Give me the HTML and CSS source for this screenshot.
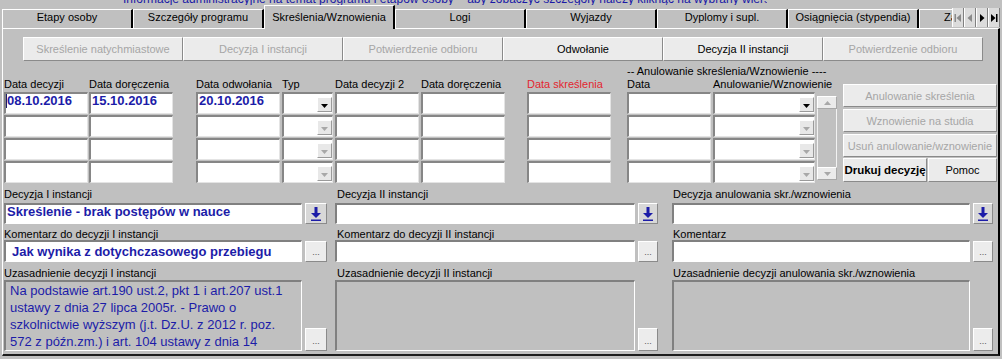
FILE: index.html
```html
<!DOCTYPE html>
<html lang="pl">
<head>
<meta charset="utf-8">
<title>Skreślenia/Wznowienia</title>
<link rel="stylesheet" href="styles.css">
</head>
<body>
<div class="topline"><span>Informacje administracyjne na temat programu i etapów osoby – aby zobaczyć szczegóły należy kliknąć na wybrany wiersz z nazwiskiem studenta (F1)</span></div>

<div class="tabs">
  <div class="tab">Etapy osoby</div>
  <div class="tab">Szczegóły programu</div>
  <div class="tab active">Skreślenia/Wznowienia</div>
  <div class="tab">Logi</div>
  <div class="tab">Wyjazdy</div>
  <div class="tab">Dyplomy i supl.</div>
  <div class="tab">Osiągnięcia (stypendia)</div>
  <div class="tab">Zakwaterowanie</div>
  <div class="tabnav">
    <span class="navbtn"><svg width="8" height="8" viewBox="0 0 8 8"><rect x="0.5" y="0" width="1.5" height="8" fill="#8a8a8a"/><polygon points="7,0 7,8 2.5,4" fill="#8a8a8a"/></svg></span>
    <span class="navbtn"><svg width="8" height="8" viewBox="0 0 8 8"><polygon points="6,0 6,8 1.5,4" fill="#8a8a8a"/></svg></span>
    <span class="navbtn"><svg width="8" height="8" viewBox="0 0 8 8"><polygon points="2,0 2,8 6.5,4" fill="#000"/></svg></span>
    <span class="navbtn"><svg width="8" height="8" viewBox="0 0 8 8"><polygon points="1,0 1,8 5.5,4" fill="#000"/><rect x="6" y="0" width="1.5" height="8" fill="#000"/></svg></span>
  </div>
</div>

<div class="panel">
  <div class="btnrow">
    <div class="btn dis">Skreślenie natychmiastowe</div>
    <div class="btn dis">Decyzja I instancji</div>
    <div class="btn dis">Potwierdzenie odbioru</div>
    <div class="btn">Odwołanie</div>
    <div class="btn">Decyzja II instancji</div>
    <div class="btn dis">Potwierdzenie odbioru</div>
  </div>

  <div class="mid">
    <div class="col c-a">
      <div class="lab">Data decyzji</div>
      <div class="cell val"><span class="caret"></span>08.10.2016</div>
      <div class="cell"></div><div class="cell"></div><div class="cell"></div>
    </div>
    <div class="col c-b">
      <div class="lab">Data doręczenia</div>
      <div class="cell val">15.10.2016</div>
      <div class="cell"></div><div class="cell"></div><div class="cell"></div>
    </div>
    <div class="col c-c">
      <div class="lab">Data odwołania</div>
      <div class="cell val">20.10.2016</div>
      <div class="cell"></div><div class="cell"></div><div class="cell"></div>
    </div>
    <div class="col c-d">
      <div class="lab">Typ</div>
      <div class="cell dd"><span class="ddbtn"><svg width="7" height="4" viewBox="0 0 7 4"><polygon points="0,0 7,0 3.5,4" fill="#000"/></svg></span></div>
      <div class="cell dd"><span class="ddbtn"><svg width="7" height="4" viewBox="0 0 7 4"><polygon points="0,0 7,0 3.5,4" fill="#a8a8a8"/></svg></span></div>
      <div class="cell dd"><span class="ddbtn"><svg width="7" height="4" viewBox="0 0 7 4"><polygon points="0,0 7,0 3.5,4" fill="#a8a8a8"/></svg></span></div>
      <div class="cell dd"><span class="ddbtn"><svg width="7" height="4" viewBox="0 0 7 4"><polygon points="0,0 7,0 3.5,4" fill="#a8a8a8"/></svg></span></div>
    </div>
    <div class="col c-e">
      <div class="lab">Data decyzji 2</div>
      <div class="cell"></div><div class="cell"></div><div class="cell"></div><div class="cell"></div>
    </div>
    <div class="col c-f">
      <div class="lab">Data doręczenia</div>
      <div class="cell"></div><div class="cell"></div><div class="cell"></div><div class="cell"></div>
    </div>
    <div class="col c-g">
      <div class="lab red">Data skreślenia</div>
      <div class="cell"></div><div class="cell"></div><div class="cell"></div><div class="cell"></div>
    </div>
    <div class="group">
      <div class="ghead">-- Anulowanie skreślenia/Wznowienie ----</div>
      <div class="grow">
        <div class="col c-h">
          <div class="lab">Data</div>
          <div class="cell"></div><div class="cell"></div><div class="cell"></div><div class="cell"></div>
        </div>
        <div class="col c-i">
          <div class="lab">Anulowanie/Wznowienie</div>
          <div class="cell dd"><span class="ddbtn"><svg width="7" height="4" viewBox="0 0 7 4"><polygon points="0,0 7,0 3.5,4" fill="#000"/></svg></span></div>
          <div class="cell dd"><span class="ddbtn"><svg width="7" height="4" viewBox="0 0 7 4"><polygon points="0,0 7,0 3.5,4" fill="#a8a8a8"/></svg></span></div>
          <div class="cell dd"><span class="ddbtn"><svg width="7" height="4" viewBox="0 0 7 4"><polygon points="0,0 7,0 3.5,4" fill="#a8a8a8"/></svg></span></div>
          <div class="cell dd"><span class="ddbtn"><svg width="7" height="4" viewBox="0 0 7 4"><polygon points="0,0 7,0 3.5,4" fill="#a8a8a8"/></svg></span></div>
        </div>
        <div class="vscroll">
          <span class="sbbtn"><svg width="7" height="4" viewBox="0 0 7 4"><polygon points="0,4 7,4 3.5,0" fill="#a8a8a8"/></svg></span>
          <span class="sbtrack"></span>
          <span class="sbbtn"><svg width="7" height="4" viewBox="0 0 7 4"><polygon points="0,0 7,0 3.5,4" fill="#a8a8a8"/></svg></span>
        </div>
      </div>
    </div>
    <div class="rbtns">
      <div class="rb dis">Anulowanie skreślenia</div>
      <div class="rb dis">Wznowienie na studia</div>
      <div class="rb dis">Usuń anulowanie/wznowienie</div>
      <div class="rbrow">
        <div class="rb print">Drukuj decyzję</div>
        <div class="rb help">Pomoc</div>
      </div>
    </div>
  </div>

  <div class="bottom">
    <div class="bcol bcol1">
      <div class="blab blab1">Decyzja I instancji</div>
      <div class="field f1">
        <div class="box sunk bval">Skreślenie - brak postępów w nauce</div>
        <div class="pick w22"><svg width="10" height="14" viewBox="0 0 10 14"><rect x="3.5" y="0" width="3" height="6" fill="#1c1ca8"/><polygon points="0,6 10,6 5,11" fill="#1c1ca8"/><rect x="0" y="12.5" width="10" height="1.5" fill="#1c1ca8"/></svg></div>
      </div>
      <div class="blab blab2">Komentarz do decyzji I instancji</div>
      <div class="field f2">
        <div class="box sunk bval bval2">Jak wynika z dotychczasowego przebiegu</div>
        <div class="more w22">...</div>
      </div>
      <div class="blab blab3">Uzasadnienie decyzji I instancji</div>
      <div class="field f3">
        <div class="box sunk grey memo">Na podstawie art.190 ust.2, pkt 1 i art.207 ust.1<br>ustawy z dnia 27 lipca 2005r. - Prawo o<br>szkolnictwie wyższym (j.t. Dz.U. z 2012 r. poz.<br>572 z późn.zm.) i art. 104 ustawy z dnia 14</div>
        <div class="more w22 tall">...</div>
      </div>
    </div>

    <div class="bcol bcol2">
      <div class="blab blab1">Decyzja II instancji</div>
      <div class="field f1">
        <div class="box sunk"></div>
        <div class="pick"><svg width="10" height="14" viewBox="0 0 10 14"><rect x="3.5" y="0" width="3" height="6" fill="#1c1ca8"/><polygon points="0,6 10,6 5,11" fill="#1c1ca8"/><rect x="0" y="12.5" width="10" height="1.5" fill="#1c1ca8"/></svg></div>
      </div>
      <div class="blab blab2">Komentarz do decyzji II instancji</div>
      <div class="field f2">
        <div class="box sunk"></div>
        <div class="more">...</div>
      </div>
      <div class="blab blab3">Uzasadnienie decyzji II instancji</div>
      <div class="field f3">
        <div class="box sunk grey"></div>
        <div class="more tall">...</div>
      </div>
    </div>

    <div class="bcol bcol3">
      <div class="blab blab1">Decyzja anulowania skr./wznowienia</div>
      <div class="field f1">
        <div class="box sunk"></div>
        <div class="pick"><svg width="10" height="14" viewBox="0 0 10 14"><rect x="3.5" y="0" width="3" height="6" fill="#1c1ca8"/><polygon points="0,6 10,6 5,11" fill="#1c1ca8"/><rect x="0" y="12.5" width="10" height="1.5" fill="#1c1ca8"/></svg></div>
      </div>
      <div class="blab blab2">Komentarz</div>
      <div class="field f2">
        <div class="box sunk"></div>
        <div class="more">...</div>
      </div>
      <div class="blab blab3">Uzasadnienie decyzji anulowania skr./wznowienia</div>
      <div class="field f3">
        <div class="box sunk grey"></div>
        <div class="more tall">...</div>
      </div>
    </div>
  </div>
</div>
</body>
</html>
```

FILE: styles.css
```css
* { box-sizing: border-box; }

html, body { margin: 0; }

body {
  width: 1002px;
  height: 359px;
  overflow: hidden;
  background: #c0c0c0;
  padding: 0 2px;
  font-family: "Liberation Sans", Arial, sans-serif;
  font-size: 11px;
  color: #000;
}

/* clipped info line at the very top */
.topline {
  height: 5px;
  overflow: hidden;
  padding-left: 121px;
}
.topline span {
  display: block;
  width: 644px;
  overflow: hidden;
  white-space: nowrap;
  font-size: 12px;
  line-height: 12px;
  margin-top: -7px;
  color: #1a1aa6;
}

/* tabs */
.tabs {
  position: relative;
  display: flex;
  align-items: flex-end;
  height: 23px;
  overflow-x: clip;
}
.tab {
  flex: 0 0 131px;
  height: 19px;
  padding-top: 1px;
  line-height: 12px;
  text-align: center;
  white-space: nowrap;
  overflow: hidden;
  border-top: 1px solid #fff;
  border-left: 1px solid #fff;
  border-right: 2px solid #000;
}
.tab.active {
  height: 24px;
  margin-bottom: -1px;
  padding-top: 5px;
  position: relative;
  z-index: 1;
  background: #c0c0c0;
}
.tabnav {
  position: absolute;
  right: 0;
  top: 3px;
  height: 19px;
  display: flex;
  z-index: 2;
  background: #c0c0c0;
}
.navbtn {
  width: 12px;
  height: 19px;
  display: flex;
  align-items: center;
  justify-content: center;
  background: #dcdcdc;
  border-left: 1px solid #fff;
  border-right: 1px solid #808080;
}

/* panel */
.panel {
  border-top: 1px solid #fff;
  border-left: 1px solid #fff;
  border-right: 2px solid #000;
  border-bottom: 2px solid #1c1c1c;
  padding-bottom: 3px;
}

.btnrow {
  display: flex;
  margin: 8px 0 0 20px;
  height: 24px;
}
.btn {
  width: 160px;
  height: 24px;
  display: flex;
  align-items: center;
  justify-content: center;
  background: #ebebeb;
  border-top: 1px solid #fff;
  border-left: 1px solid #fff;
  border-right: 1px solid #8a8a8a;
  border-bottom: 1px solid #8a8a8a;
  white-space: nowrap;
}
.dis { color: #a6a6a6; }

/* middle grid */
.mid {
  display: flex;
  align-items: flex-end;
  margin-top: 4px;
  padding-left: 1px;
}
.col {
  display: flex;
  flex-direction: column;
  gap: 1px;
}
.c-a { width: 84px; }
.c-b { width: 84px; margin-left: 1px; }
.c-c { width: 84px; margin-left: 23px; }
.c-d { width: 51px; margin-left: 2px; }
.c-e { width: 84px; margin-left: 2px; }
.c-f { width: 84px; margin-left: 2px; }
.c-g { width: 84px; margin-left: 22px; }
.c-h { width: 84px; }
.c-i { width: 102px; }

.lab {
  height: 12px;
  line-height: 11px;
  white-space: nowrap;
}
.red { color: #e3262f; }

.cell {
  height: 22px;
  background: #fff;
  border-style: solid;
  border-width: 2px 1px 1px 2px;
  border-color: #868686 #e4e4e4 #e4e4e4 #868686;
}
.val {
  padding-left: 1px;
  line-height: 14px;
  font-size: 13px;
  font-weight: bold;
  color: #1c1ca8;
  white-space: nowrap;
  display: flex;
  align-items: flex-start;
}
.caret {
  display: inline-block;
  width: 1px;
  height: 14px;
  background: #1c1c6a;
  margin-left: -1px;
}
.dd {
  display: flex;
  justify-content: flex-end;
  align-items: flex-end;
  padding-bottom: 1px;
}
.ddbtn {
  width: 15px;
  height: 15px;
  display: flex;
  align-items: center;
  justify-content: center;
  padding-top: 2px;
  background: #e8e8e8;
  border: 1px solid;
  border-color: #fff #9a9a9a #9a9a9a #fff;
}

.group {
  display: flex;
  flex-direction: column;
  margin-left: 16px;
}
.ghead {
  height: 14px;
  line-height: 12px;
  white-space: nowrap;
}
.grow {
  display: flex;
  align-items: flex-end;
  gap: 2px;
}
.vscroll {
  width: 20px;
  height: 91px;
  display: flex;
  flex-direction: column;
  padding: 4px 0 3px;
}
.sbbtn {
  height: 13px;
  display: flex;
  align-items: center;
  justify-content: center;
  background: #ebebeb;
  border: 1px solid;
  border-color: #fff #a8a8a8 #a8a8a8 #fff;
}
.sbtrack {
  flex: 1;
  background: #c0c0c0;
  border-left: 1px solid #f2f2f2;
  border-right: 1px solid #f2f2f2;
}

.rbtns {
  align-self: flex-start;
  margin: 19px 0 0 6px;
  width: 154px;
  display: flex;
  flex-direction: column;
}
.rb {
  height: 23px;
  margin-bottom: 2px;
  display: flex;
  align-items: center;
  justify-content: center;
  background: #ebebeb;
  border-top: 1px solid #fff;
  border-left: 1px solid #fff;
  border-right: 1px solid #8a8a8a;
  border-bottom: 1px solid #8a8a8a;
  white-space: nowrap;
}
.rb:nth-child(3) { margin-bottom: 1px; }
.rbrow {
  display: flex;
  gap: 1px;
  height: 24px;
}
.rbrow .rb { height: 24px; margin: 0; }
.print { width: 84px; font-weight: bold; font-size: 11.5px; }
.help { width: 69px; }

/* bottom fields */
.bottom {
  display: flex;
  padding-left: 1px;
}
.bcol {
  display: flex;
  flex-direction: column;
}
.bcol1 { width: 323px; }
.bcol2 { width: 323px; margin-left: 8px; }
.bcol3 { width: 321px; margin-left: 14px; }
.bcol2 .blab { padding-left: 2px; }
.bcol3 .blab { padding-left: 1px; }

.blab {
  white-space: nowrap;
  line-height: 12px;
}
.blab1 { height: 20px; padding-top: 5px; }
.blab2 { height: 16px; padding-top: 4px; }
.blab3 { height: 18px; padding-top: 5px; }

.field {
  display: flex;
  align-items: flex-end;
  gap: 3px;
}
.f1 { height: 21px; }
.f2 { height: 22px; }
.f3 { height: 71px; }
.box {
  flex: 1;
  height: 100%;
}
.sunk {
  background: #fff;
  border-style: solid;
  border-width: 2px 1px 1px 2px;
  border-color: #808080 #fff #fff #808080;
}
.grey { background: #c0c0c0; }

.bval {
  padding-left: 1px;
  font-size: 13px;
  line-height: 14px;
  font-weight: bold;
  color: #1c1ca8;
  white-space: nowrap;
  overflow: hidden;
}
.bval2 { padding-top: 3px; padding-left: 6px; }

.memo {
  padding-left: 4px;
  font-size: 13px;
  line-height: 17px;
  color: #1c1ca8;
  white-space: nowrap;
  overflow: hidden;
}

.pick, .more {
  width: 20px;
  height: 21px;
  display: flex;
  align-items: center;
  justify-content: center;
  border: 1px solid;
  border-color: #fff #8a8a8a #8a8a8a #fff;
}
.pick { background: #d8d8d8; }
.more {
  background: #ececec;
  align-items: flex-end;
  padding-bottom: 4px;
  font-size: 9px;
  line-height: 9px;
  color: #555;
}
.w22 { width: 22px; }
.tall { height: 23px; }
```
